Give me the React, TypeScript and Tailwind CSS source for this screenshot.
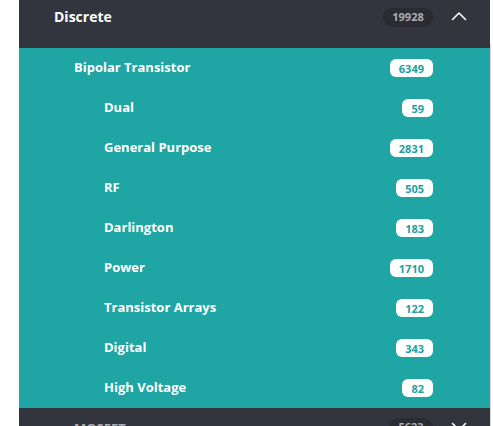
const items = [
  { name: 'Dual', count: 59 },
  { name: 'General Purpose', count: 2831 },
  { name: 'RF', count: 505 },
  { name: 'Darlington', count: 183 },
  { name: 'Power', count: 1710 },
  { name: 'Transistor Arrays', count: 122 },
  { name: 'Digital', count: 343 },
  { name: 'High Voltage', count: 82 },
]

function Badge({ n }: { n: number }) {
  return (
    <span className="bg-white text-[#23a09d] text-[11px] font-bold leading-none rounded-[6px] h-[18px] px-[9px] flex items-center">
      {n}
    </span>
  )
}

function Chevron({ up }: { up?: boolean }) {
  return (
    <svg width="16" height="10" viewBox="0 0 16 10" fill="none" stroke="white" strokeWidth="1.6" strokeLinecap="round" strokeLinejoin="round">
      {up ? <polyline points="1.5,8.5 8,2 14.5,8.5" /> : <polyline points="1.5,1.5 8,8 14.5,1.5" />}
    </svg>
  )
}

export default function App() {
  return (
    <div className="w-[493px] h-[426px] overflow-hidden bg-white flex" style={{ fontFamily: '"Open Sans", "Noto Sans", sans-serif' }}>
      <div className="ml-[19px] w-[471px] flex flex-col">
        {/* Discrete header */}
        <div className="bg-[#32353d] h-[48px] shrink-0 flex items-start pt-[8px] pl-[35px] pr-[23px]">
          <span className="text-white font-bold text-[14px] leading-[17px] flex-1">Discrete</span>
          <span className="bg-[#2a2c32] text-[#a9adb4] text-[11px] font-bold rounded-full h-[19px] w-[50px] flex items-center justify-center">19928</span>
          <span className="ml-[18px] mt-[3px]"><Chevron up /></span>
        </div>

        <div className="bg-[#1fa5a3] shrink-0">
          <div className="h-[40px] flex items-center pl-[55px] pr-[57px]">
            <span className="flex-1 text-white font-bold text-[13px]">Bipolar Transistor</span>
            <Badge n={6349} />
          </div>
          {items.map(it => (
            <div key={it.name} className="h-[40px] flex items-center pl-[85px] pr-[57px]">
              <span className="flex-1 text-white font-bold text-[13px]">{it.name}</span>
              <Badge n={it.count} />
            </div>
          ))}
        </div>

        <div className="bg-[#32353d] h-[48px] shrink-0 flex items-start pt-[10px] pl-[55px] pr-[23px]">
          <span className="text-[#a9adb4] font-bold text-[13px] leading-[17px] flex-1 mt-[2px]">MOSFET</span>
          <span className="bg-[#2a2c32] text-[#a9adb4] text-[11px] font-bold rounded-full h-[19px] w-[44px] flex items-center justify-center">5623</span>
          <span className="ml-[18px] mt-[4px]"><Chevron /></span>
        </div>
      </div>
      <div className="w-[1px] mt-[44px] bg-[#d9d9d9]" />
    </div>
  )
}
